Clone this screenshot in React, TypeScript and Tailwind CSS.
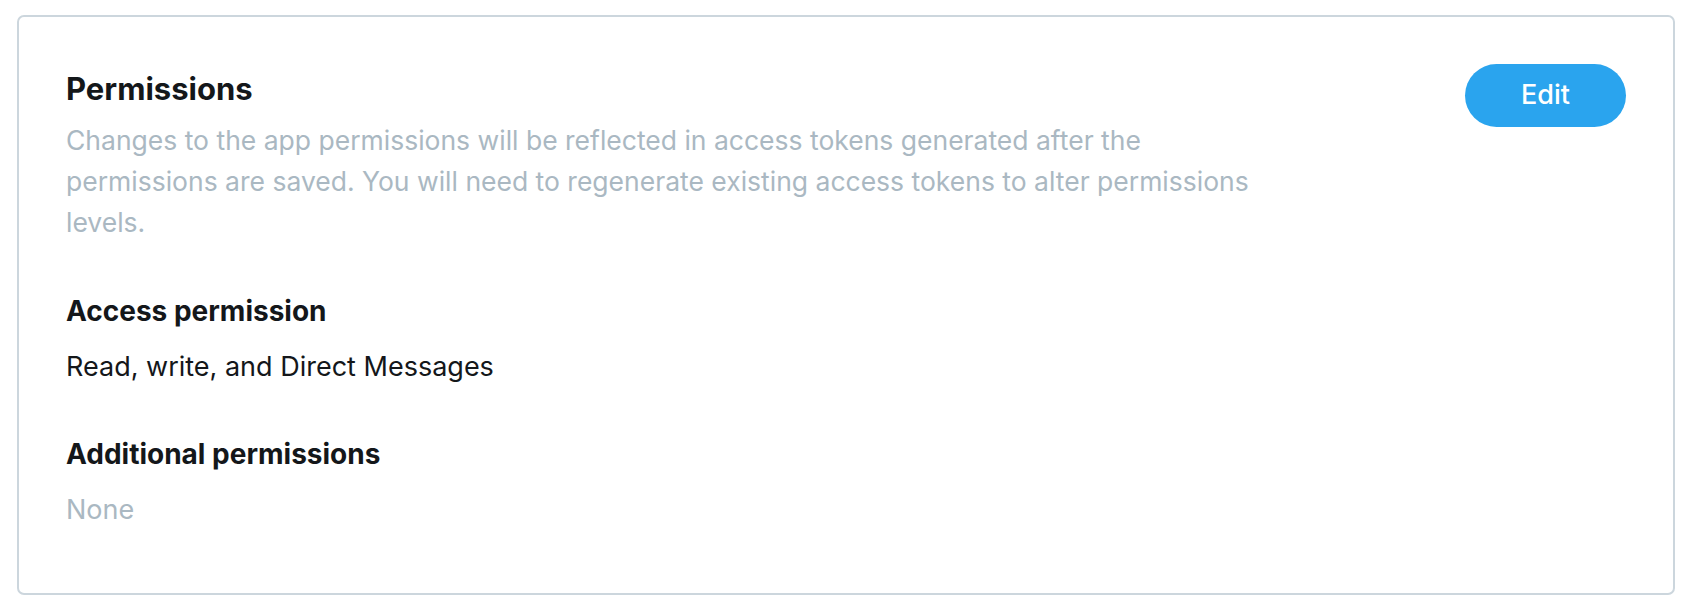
const font = { fontFamily: "Inter, 'Noto Sans', sans-serif" };

function Field({ label, value, muted, first }: { label: string; value: string; muted?: boolean; first?: boolean }) {
  return (
    <div className={first ? "mt-[50px]" : "mt-[51px]"}>
      <h3 className="text-[28px] leading-[36px] font-bold text-[#14171a]">{label}</h3>
      <p className={`mt-[20px] text-[27px] leading-[36px] ${muted ? "text-[#aab8c2]" : "text-[#14171a]"}`}>
        {value}
      </p>
    </div>
  );
}

export default function App() {
  return (
    <div className="min-h-screen bg-white px-[17px] pt-[15px] pb-[16px]" style={font}>
      <div className="rounded-[7px] border-2 border-[#ccd6dd] px-[47px] pt-[52px] pb-[65px]">
        <div className="flex items-start justify-between">
          <div className="max-w-[1215px]">
            <h2 className="text-[31px] leading-[40px] font-bold text-[#14171a]">Permissions</h2>
            <p className="mt-[11px] text-[26.5px] leading-[41px] text-[#aab8c2]">
              Changes to the app permissions will be reflected in access tokens generated after the
              permissions are saved. You will need to regenerate existing access tokens to alter permissions
              levels.
            </p>
          </div>
          <button className="-mt-[5px] h-[63px] w-[161px] shrink-0 rounded-full bg-[#2aa4ee] text-[27px] font-medium text-white">
            Edit
          </button>
        </div>
        <Field first label="Access permission" value="Read, write, and Direct Messages" />
        <Field label="Additional permissions" value="None" muted />
      </div>
    </div>
  );
}
